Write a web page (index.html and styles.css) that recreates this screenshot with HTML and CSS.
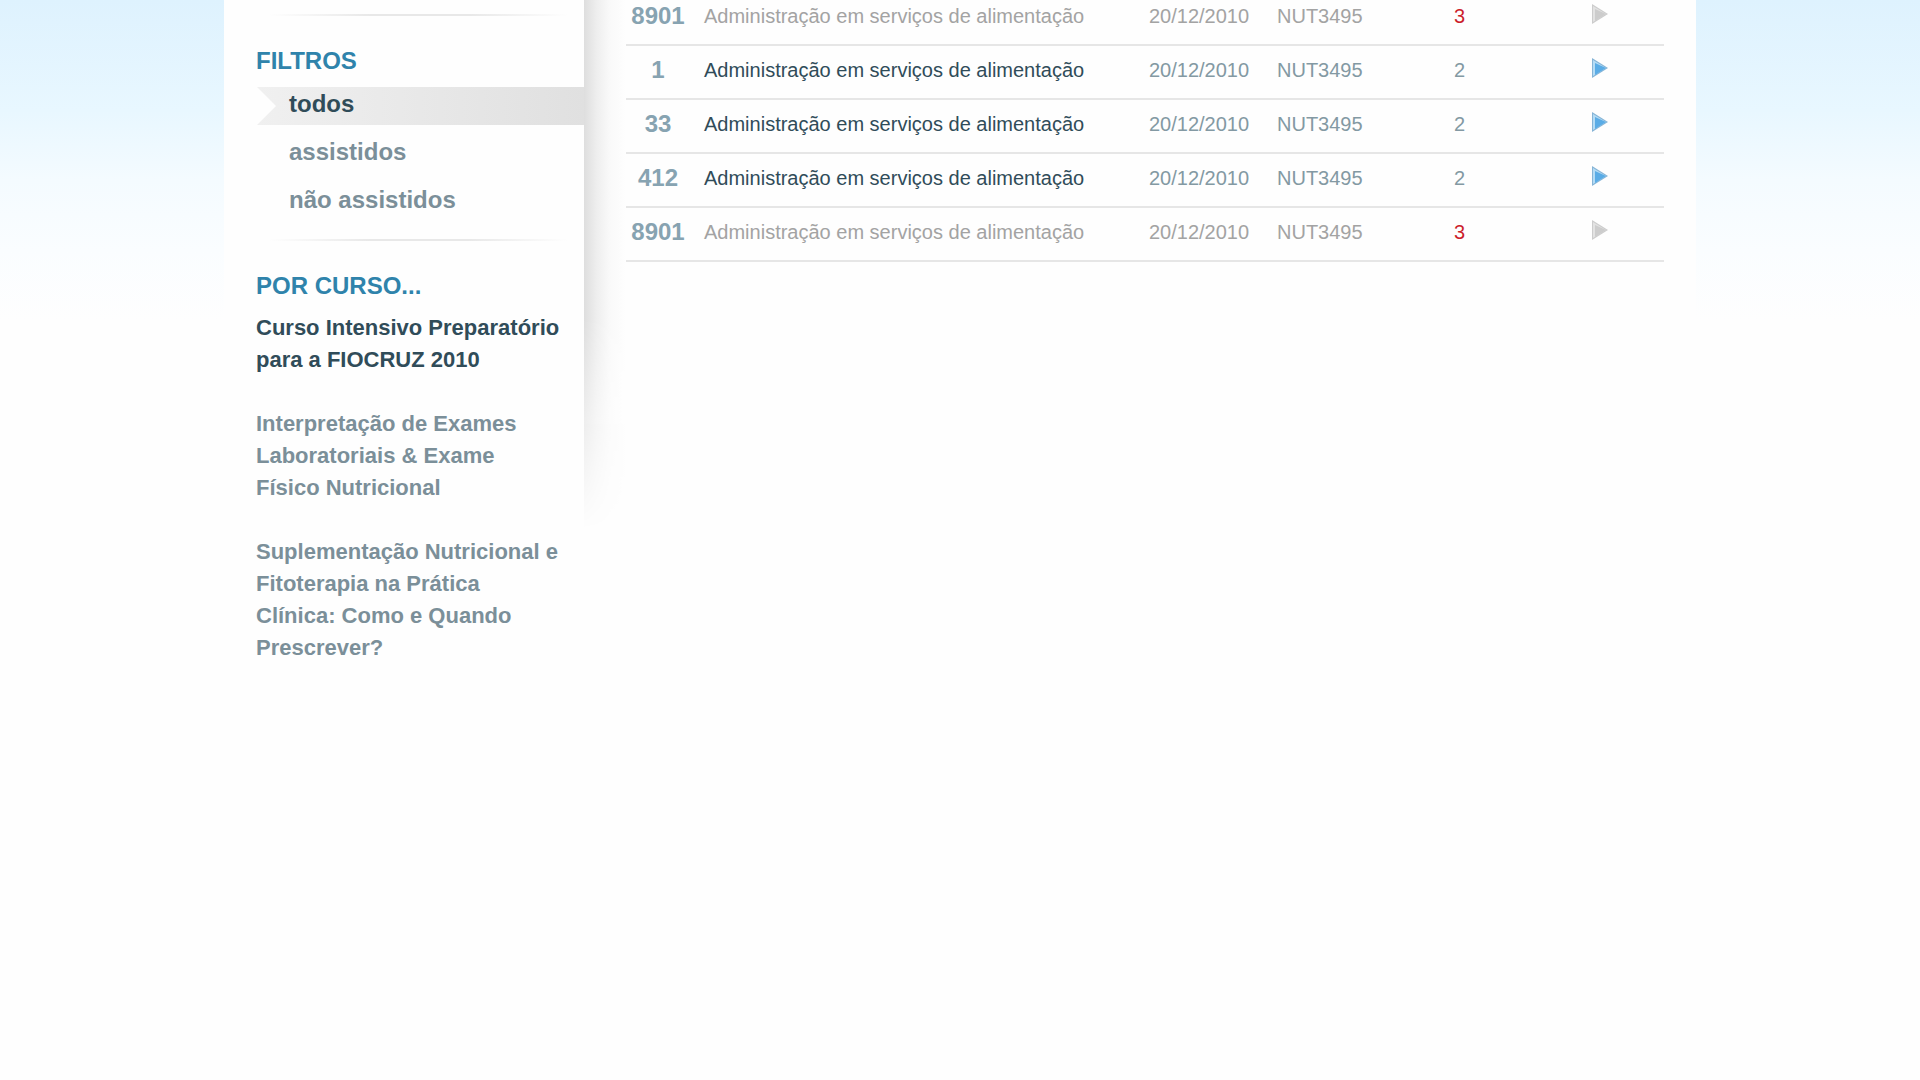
FILE: index.html
```html
<!DOCTYPE html>
<html lang="pt-br">
  <head>
    <title>Aulas</title>
    <meta charset="utf-8" />
    <meta name="viewport" content="width=device-width, initial-scale=1" />
    <link rel="stylesheet" href="styles.css">
  </head>
  <body>
    <svg width="0" height="0" class="sprite" aria-hidden="true">
      <symbol id="play" viewBox="0 0 16 20">
        <path class="play-edge" d="M0 0 L16 10 L0 20 Z" />
        <path class="play-gloss" d="M1 2 L14 10 L1 18 Z" />
        <path class="play-fill" d="M3 5 L14 10 L3 17 Z" />
      </symbol>
    </svg>
    <div class="container">
      <aside class="sidebar">
        <hr class="divider" />
        <h2>FILTROS</h2>
        <ul class="filters">
          <li><a href="#todos" class="active">todos</a></li>
          <li><a href="#assistidos">assistidos</a></li>
          <li><a href="#nao-assistidos">não assistidos</a></li>
        </ul>
        <hr class="divider" />
        <h2>POR CURSO...</h2>
        <ul class="courses">
          <li><a href="#curso-1" class="active">Curso Intensivo Preparatório para a FIOCRUZ 2010</a></li>
          <li><a href="#curso-2">Interpretação de Exames Laboratoriais &amp; Exame Físico Nutricional</a></li>
          <li><a href="#curso-3">Suplementação Nutricional e Fitoterapia na Prática Clínica: Como e Quando Prescrever?</a></li>
        </ul>
      </aside>
      <div class="shade"></div>
      <main class="content">
        <table class="lessons">
          <tbody>
            <tr class="watched">
              <td class="number">8901</td>
              <td class="title">Administração em serviços de alimentação</td>
              <td class="date">20/12/2010</td>
              <td class="code">NUT3495</td>
              <td class="views">3</td>
              <td class="play"><a href="#aula" aria-label="Assistir"><svg><use href="#play" /></svg></a></td>
            </tr>
            <tr>
              <td class="number">1</td>
              <td class="title">Administração em serviços de alimentação</td>
              <td class="date">20/12/2010</td>
              <td class="code">NUT3495</td>
              <td class="views">2</td>
              <td class="play"><a href="#aula" aria-label="Assistir"><svg><use href="#play" /></svg></a></td>
            </tr>
            <tr>
              <td class="number">33</td>
              <td class="title">Administração em serviços de alimentação</td>
              <td class="date">20/12/2010</td>
              <td class="code">NUT3495</td>
              <td class="views">2</td>
              <td class="play"><a href="#aula" aria-label="Assistir"><svg><use href="#play" /></svg></a></td>
            </tr>
            <tr>
              <td class="number">412</td>
              <td class="title">Administração em serviços de alimentação</td>
              <td class="date">20/12/2010</td>
              <td class="code">NUT3495</td>
              <td class="views">2</td>
              <td class="play"><a href="#aula" aria-label="Assistir"><svg><use href="#play" /></svg></a></td>
            </tr>
            <tr class="watched">
              <td class="number">8901</td>
              <td class="title">Administração em serviços de alimentação</td>
              <td class="date">20/12/2010</td>
              <td class="code">NUT3495</td>
              <td class="views">3</td>
              <td class="play"><a href="#aula" aria-label="Assistir"><svg><use href="#play" /></svg></a></td>
            </tr>
          </tbody>
        </table>
      </main>
    </div>
  </body>
</html>
```
FILE: styles.css
```css
body {
  margin: 0;
  font-family: "Liberation Sans", Arial, sans-serif;
  background: #fefefe linear-gradient(#def2fe, #e8f7ff 110px, #f4fbff 180px, #fafdff 250px, #fefefe 320px) no-repeat;
  background-size: 100% 320px;
}

a {
  color: inherit;
  text-decoration: none;
}

ul {
  list-style: none;
  margin: 0;
  padding: 0;
}

.sprite {
  position: absolute;
}

.container {
  display: flex;
  align-items: flex-start;
  max-width: 1472px;
  min-height: 100vh;
  margin: 0 auto;
  background: #fefefe;
}

/* sidebar */

.sidebar {
  box-sizing: border-box;
  flex: none;
  width: 360px;
  padding: 14px 0 32px 32px;
}

.divider {
  height: 2px;
  margin: 0 0 31px;
  border: 0;
  background: linear-gradient(to right, transparent 4%, #e8e8e8 35%, #e8e8e8 65%, transparent 95%);
}

h2 {
  margin: 0 0 12px;
  font-size: 24px;
  line-height: 28px;
  color: #2f83ab;
}

.filters {
  display: flex;
  flex-direction: column;
  gap: 10px;
  margin-bottom: 18px;
}

.filters a {
  display: block;
  margin-left: 1px;
  padding: 0 0 4px 32px;
  font-size: 24px;
  font-weight: bold;
  line-height: 34px;
  color: #7b8f99;
}

.filters .active {
  color: #304c59;
  background: linear-gradient(to right, #f0f0f0, #e0e0e0);
  clip-path: polygon(0 0, 100% 0, 100% 100%, 0 100%, 19px 50%);
}

.courses {
  display: flex;
  flex-direction: column;
  gap: 32px;
  padding-right: 20px;
  font-size: 22px;
  font-weight: bold;
  line-height: 32px;
  color: #7b8f99;
}

.courses .active {
  color: #304c59;
}

.shade {
  flex: none;
  width: 42px;
  height: 530px;
  background: linear-gradient(to right, #dedede, #eeeeee 30%, #f9f9f9 60%, #fefefe);
  -webkit-mask-image: linear-gradient(#000 60%, transparent);
  mask-image: linear-gradient(#000 60%, transparent);
}

/* lessons */

.content {
  flex: 1;
  padding-right: 32px;
}

.lessons {
  --edge: #86b4d6;
  --gloss: #b5dcf5;
  --fill: #5aace6;
  width: 100%;
  border-collapse: separate;
  border-spacing: 0;
  table-layout: fixed;
  font-size: 20px;
  line-height: 24px;
  color: #8399a3;
}

.lessons td {
  padding: 12px 0 16px;
  border-bottom: 2px solid #e6e6e6;
}

.lessons tr:first-child td {
  padding-top: 4px;
}

.lessons .number {
  width: 64px;
  font-size: 24px;
  font-weight: bold;
  text-align: center;
  color: #87a3b1;
}

.lessons .title {
  padding-left: 14px;
  color: #304c59;
}

.lessons .date {
  width: 128px;
}

.lessons .code {
  width: 130px;
}

.lessons .views {
  width: 105px;
  text-align: center;
}

.lessons .play {
  width: 72px;
  padding-left: 80px;
}

.play a {
  display: block;
  height: 24px;
}

.play svg {
  display: block;
  width: 16px;
  height: 20px;
}

.play-edge {
  fill: var(--edge);
}

.play-gloss {
  fill: var(--gloss);
}

.play-fill {
  fill: var(--fill);
}

.watched {
  --edge: #cccccc;
  --gloss: #e2e2e2;
  --fill: #cccccc;
}

.watched,
.lessons .watched .title {
  color: #a3a3a3;
}

.lessons .watched .views {
  color: #cc1f2b;
}
```
